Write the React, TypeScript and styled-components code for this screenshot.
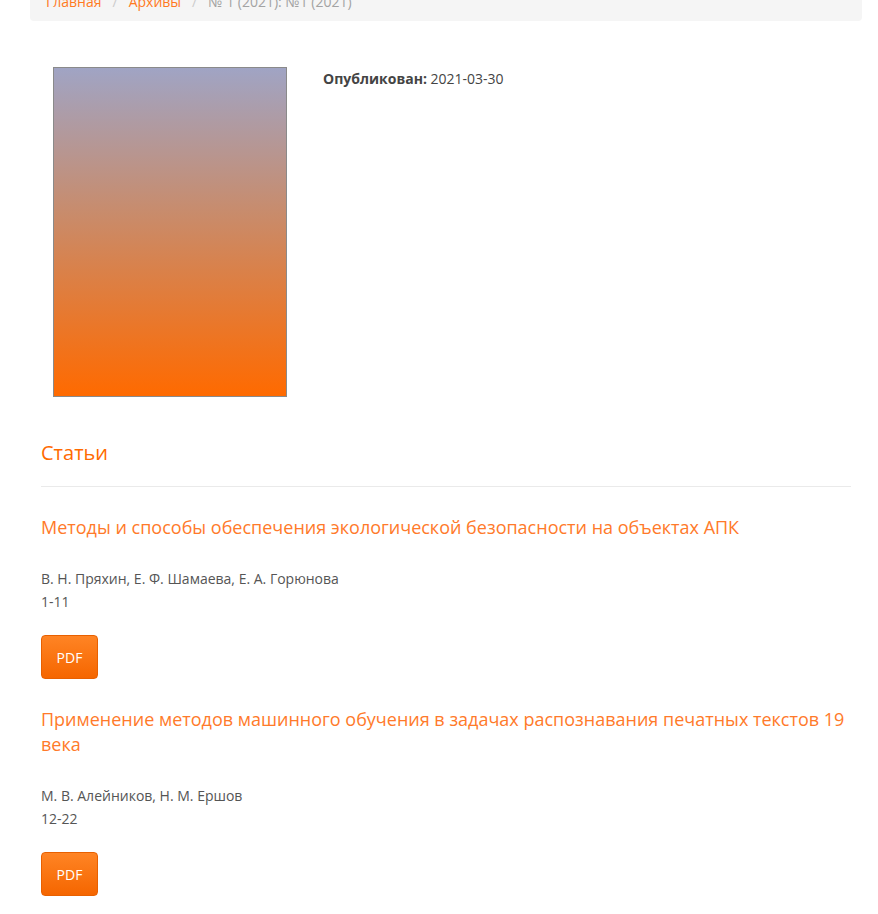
import styled, { createGlobalStyle } from "styled-components";

const GlobalStyle = createGlobalStyle`
  html, body {
    margin: 0;
    padding: 0;
    background: #fff;
  }
  body {
    font-family: "Open Sans", "Noto Sans", sans-serif;
    color: #555;
    overflow: hidden;
  }
`;

const Page = styled.div`
  width: 878px;
  height: 914px;
  overflow: hidden;
  padding: 0 16px 0 30px;
  box-sizing: border-box;
`;

const Breadcrumb = styled.ol`
  margin: -18px 0 0;
  padding: 8px 16px;
  height: 39px;
  box-sizing: border-box;
  list-style: none;
  display: flex;
  align-items: center;
  background: #f5f5f5;
  border-radius: 4px;
  font-size: 14px;

  li + li::before {
    content: "/";
    color: #ccc;
    padding: 0 11px;
  }
`;

const Crumb = styled.li<{ $current?: boolean }>`
  color: ${(p) => (p.$current ? "#a3a3a3" : "#ff7a1f")};
`;

const Content = styled.div`
  padding: 0 11px;
`;

const IssueHead = styled.div`
  display: flex;
  gap: 36px;
  padding: 46px 0 0 12px;
`;

const Cover = styled.div`
  width: 234px;
  height: 330px;
  flex: none;
  border: 1px solid #8a8a8a;
  box-sizing: border-box;
  background: linear-gradient(to bottom, #a0a4c4 0%, #c98b6a 45%, #ff6a00 100%);
`;

const Published = styled.div`
  font-size: 14px;
  color: #444;
  padding-top: 2px;

  strong {
    font-weight: 700;
  }
`;

const SectionTitle = styled.h2`
  margin: 42px 0 0;
  font-size: 20px;
  font-weight: 400;
  color: #ff6a00;
  line-height: 28px;
`;

const Rule = styled.hr`
  margin: 19px 0 28px;
  border: 0;
  border-top: 1px solid #eaeaea;
`;

const Article = styled.div`
  margin-bottom: 28px;
`;

const ArticleTitle = styled.h3`
  margin: 0;
  font-size: 18px;
  font-weight: 400;
  line-height: 25px;
  color: #ff7a2a;
`;

const Meta = styled.div`
  margin-top: 27px;
  font-size: 14px;
  line-height: 23px;
  color: #555;
`;

const PdfButton = styled.a`
  display: inline-flex;
  align-items: center;
  justify-content: center;
  margin-top: 22px;
  width: 57px;
  height: 44px;
  box-sizing: border-box;
  border-radius: 4px;
  border: 1px solid #e86000;
  background: linear-gradient(to bottom, #ff8424, #f56600);
  color: #fff;
  font-size: 14px;
  text-decoration: none;
`;

const articles = [
  {
    title: "Методы и способы обеспечения экологической безопасности на объектах АПК",
    authors: "В. Н. Пряхин, Е. Ф. Шамаева, Е. А. Горюнова",
    pages: "1-11",
  },
  {
    title:
      "Применение методов машинного обучения в задачах распознавания печатных текстов 19 века",
    authors: "М. В. Алейников, Н. М. Ершов",
    pages: "12-22",
  },
];

export default function App() {
  return (
    <>
      <GlobalStyle />
      <Page>
        <Breadcrumb>
          <Crumb>Главная</Crumb>
          <Crumb>Архивы</Crumb>
          <Crumb $current>№ 1 (2021): №1 (2021)</Crumb>
        </Breadcrumb>
        <Content>
          <IssueHead>
            <Cover />
            <Published>
              <strong>Опубликован:</strong> 2021-03-30
            </Published>
          </IssueHead>
          <SectionTitle>Статьи</SectionTitle>
          <Rule />
          {articles.map((a) => (
            <Article key={a.pages}>
              <ArticleTitle>{a.title}</ArticleTitle>
              <Meta>
                <div>{a.authors}</div>
                <div>{a.pages}</div>
              </Meta>
              <PdfButton href="#">PDF</PdfButton>
            </Article>
          ))}
        </Content>
      </Page>
    </>
  );
}
